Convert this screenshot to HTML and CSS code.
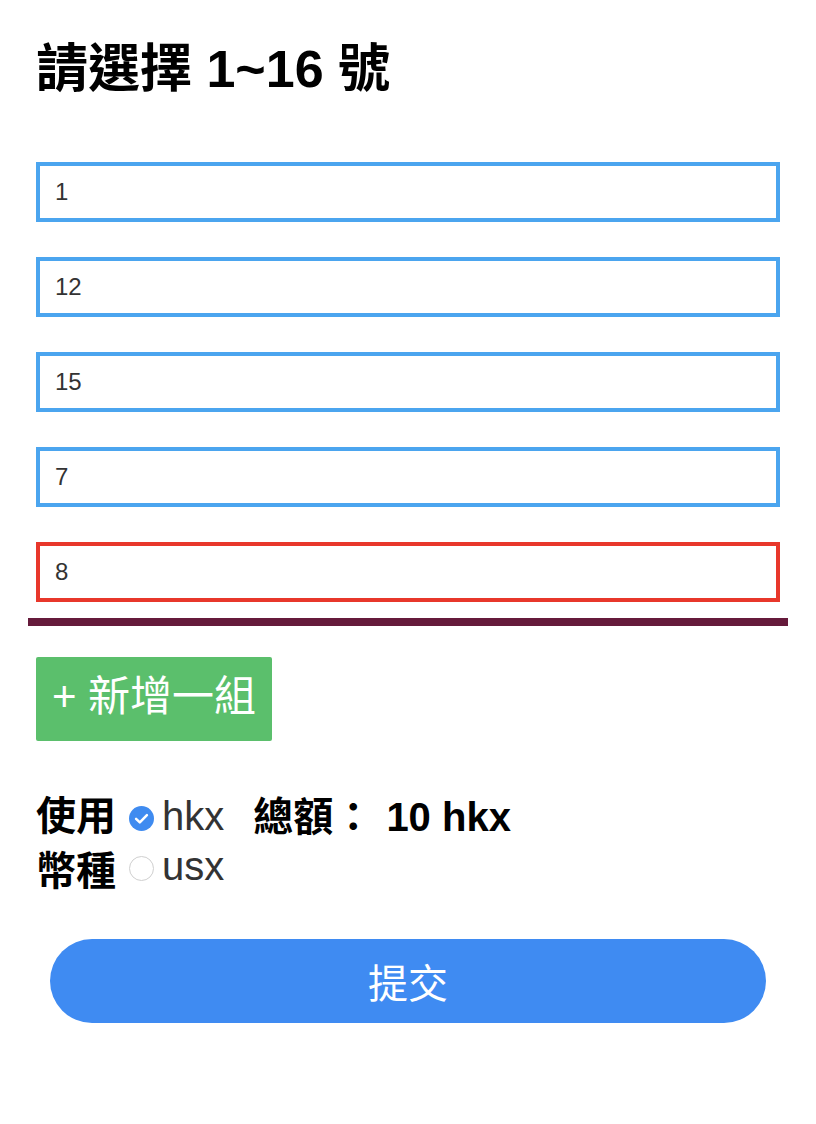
FILE: index.html
```html
<!DOCTYPE html>
<html lang="zh-Hant">
<head>
<meta charset="utf-8">
<title>請選擇</title>
<link rel="stylesheet" href="styles.css">
</head>
<body>
<main class="page">
  <h1 class="title">請選擇 1~16 號</h1>
  <div class="groups">
    <input class="num" type="text" value="1">
    <input class="num" type="text" value="12">
    <input class="num" type="text" value="15">
    <input class="num" type="text" value="7">
    <input class="num num-error" type="text" value="8">
  </div>
  <button class="add-btn" type="button">+ 新增一組</button>
  <div class="currency">
    <div class="cur-label">使用幣種</div>
    <div class="options">
      <label class="opt">
        <span class="radio radio-on"><svg viewBox="0 0 24 24" width="24" height="24"><circle cx="12" cy="12" r="12" fill="#3f8bf0"/><path d="M6.8 12.3 L10.4 15.7 L17.2 8.8" fill="none" stroke="#fff" stroke-width="2.4" stroke-linecap="round" stroke-linejoin="round"/></svg></span>
        <span class="opt-text">hkx</span>
      </label>
      <label class="opt">
        <span class="radio radio-off"></span>
        <span class="opt-text">usx</span>
      </label>
    </div>
    <div class="total">總額： <span class="total-val">10 hkx</span></div>
  </div>
  <button class="submit" type="button">提交</button>
</main>
</body>
</html>
```
FILE: styles.css
```css
html, body {
  margin: 0;
  padding: 0;
  background: #fff;
}
body {
  font-family: "Liberation Sans", "Noto Sans CJK TC", sans-serif;
  color: #000;
}
.page {
  padding: 0 36px;
}
.title {
  margin: 0;
  padding-top: 39px;
  font-size: 52px;
  line-height: 60px;
  font-weight: bold;
  height: 123px;
  box-sizing: border-box;
  white-space: nowrap;
}
.groups {
  display: flex;
  flex-direction: column;
  gap: 35px;
  margin: 0 -8px;
  padding: 39px 8px 16px;
  border-bottom: 8px solid #651a3b;
}
.num {
  display: block;
  box-sizing: border-box;
  width: 100%;
  height: 60px;
  margin: 0;
  padding: 0 0 0 15px;
  border: 4px solid #4ba5ef;
  border-radius: 0;
  outline: none;
  background: #fff;
  font-family: "Liberation Sans", sans-serif;
  font-size: 24px;
  color: #333;
}
.num-error {
  border-color: #e8372b;
}
.add-btn {
  display: block;
  margin-top: 31px;
  width: 236px;
  height: 84px;
  padding: 0 0 4px;
  border: none;
  border-radius: 2px;
  background: #5bbf6c;
  color: #fff;
  font-family: "Liberation Sans", "Noto Sans CJK TC", sans-serif;
  font-size: 42px;
  font-weight: normal;
  line-height: 1;
  text-align: center;
  white-space: nowrap;
}
.currency {
  display: flex;
  align-items: flex-start;
  margin-top: 48px;
}
.cur-label {
  width: 82px;
  font-size: 40px;
  line-height: 55px;
  font-weight: bold;
  margin-right: 11px;
  word-break: break-all;
}
.options {
  display: flex;
  flex-direction: column;
  padding-top: 2px;
}
.opt {
  display: flex;
  align-items: center;
  height: 50px;
}
.radio {
  display: inline-block;
  width: 25px;
  height: 25px;
  margin-right: 8px;
  margin-top: 4px;
  box-sizing: border-box;
}
.radio svg {
  display: block;
  width: 25px;
  height: 25px;
}
.radio-off {
  border: 1px solid #cfcfcf;
  border-radius: 50%;
  background: #fff;
}
.opt-text {
  font-size: 40px;
  color: #333;
  line-height: 50px;
}
.total {
  margin-left: 29px;
  padding-top: 3px;
  font-size: 40px;
  line-height: 50px;
  font-weight: bold;
  white-space: nowrap;
}
.total-val {
  margin-left: 2px;
}
.submit {
  display: block;
  margin: 40px 14px 0;
  width: calc(100% - 28px);
  height: 84px;
  border: none;
  border-radius: 42px;
  background: #3f8bf2;
  color: #fff;
  font-family: "Liberation Sans", "Noto Sans CJK TC", sans-serif;
  font-size: 40px;
  font-weight: normal;
  padding: 0;
}
```
